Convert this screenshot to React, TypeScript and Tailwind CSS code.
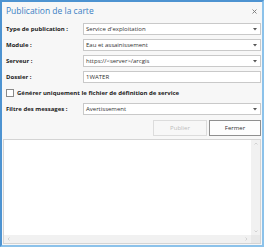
import React from "react";

const font = { fontFamily: '"Open Sans", "Noto Sans", sans-serif' };

function Caret() {
  return (
    <svg width="4" height="3" viewBox="0 0 4 3" className="shrink-0">
      <path d="M0 0 L4 0 L2 2.5 Z" fill="#555" />
    </svg>
  );
}

function Field({ value, select }: { value: string; select?: boolean }) {
  return (
    <div className="h-[12px] flex items-center justify-between bg-white border border-[#c9c9c9] pl-[2px] pr-[3px]">
      <span className="text-[6px] text-[#333] leading-none">{value}</span>
      {select && <Caret />}
    </div>
  );
}

function Label({ children }: { children: React.ReactNode }) {
  return (
    <span className="text-[6px] font-bold text-[#222] leading-none">
      {children}
    </span>
  );
}

const App = () => {
  return (
    <div
      className="w-[264px] h-[247px] flex flex-col bg-[#f7f7f7] border-2 border-[#8cc2ea] border-l-[#4d93d1] border-t-[#4d93d1]"
      style={font}
    >
      <div className="h-[19px] flex items-center justify-between pl-[4px] pr-[5px]">
        <span className="text-[8.5px] text-[#3b7fc4] leading-none">
          Publication de la carte
        </span>
        <svg width="5" height="5" viewBox="0 0 5 5">
          <path d="M0.5 0.5 L4.5 4.5 M4.5 0.5 L0.5 4.5" stroke="#777" strokeWidth="0.9" />
        </svg>
      </div>

      <div className="grid grid-cols-[77px_1fr] gap-y-[4px] items-center pl-[4px] pr-[1px] mt-[2px]">
        <Label>Type de publication :</Label>
        <Field value="Service d'exploitation" select />
        <Label>Module :</Label>
        <Field value="Eau et assainissement" select />
        <Label>Serveur :</Label>
        <Field value="https://<server>/arcgis" select />
        <Label>Dossier :</Label>
        <Field value="1WATER" />
      </div>

      <div className="flex items-center gap-[3px] pl-[4px] mt-[6px]">
        <div className="w-[8px] h-[8px] bg-white border border-[#8a8a8a]" />
        <Label>Générer uniquement le fichier de définition de service</Label>
      </div>

      <div className="grid grid-cols-[77px_1fr] items-center pl-[4px] pr-[1px] mt-[6px]">
        <Label>Filtre des messages :</Label>
        <Field value="Avertissement" select />
      </div>

      <div className="flex justify-end gap-[2px] pr-[1px] mt-[5px]">
        <div className="w-[54px] h-[16px] flex items-center justify-center border border-[#dcdcdc] bg-[#f7f7f7] text-[6px] text-[#bcbcbc]">
          Publier
        </div>
        <div className="w-[52px] h-[16px] flex items-center justify-center border border-[#8f8f8f] bg-[#fdfdfd] text-[6px] text-[#333]">
          Fermer
        </div>
      </div>

      <div className="flex-1 mx-[1px] mt-[3px] mb-[1px] border border-[#d4d4d4] bg-white flex flex-col">
        <div className="flex-1 flex">
          <div className="flex-1" />
          <div className="w-[9px] bg-[#f1f1f1] flex flex-col items-center justify-between py-[2px]">
            <svg width="4" height="3" viewBox="0 0 4 3">
              <path d="M0.5 2.5 L2 1 L3.5 2.5" stroke="#c4c4c4" strokeWidth="0.7" fill="none" />
            </svg>
            <svg width="4" height="3" viewBox="0 0 4 3">
              <path d="M0.5 0.5 L2 2 L3.5 0.5" stroke="#c4c4c4" strokeWidth="0.7" fill="none" />
            </svg>
          </div>
        </div>
        <div className="h-[8px] flex">
          <div className="flex-1 bg-[#f1f1f1] flex items-center justify-between px-[3px]">
            <svg width="3" height="4" viewBox="0 0 3 4">
              <path d="M2.5 0.5 L1 2 L2.5 3.5" stroke="#c4c4c4" strokeWidth="0.7" fill="none" />
            </svg>
            <svg width="3" height="4" viewBox="0 0 3 4">
              <path d="M0.5 0.5 L2 2 L0.5 3.5" stroke="#c4c4c4" strokeWidth="0.7" fill="none" />
            </svg>
          </div>
          <div className="w-[9px] bg-[#e8e8e8]" />
        </div>
      </div>
    </div>
  );
};

export default App;
